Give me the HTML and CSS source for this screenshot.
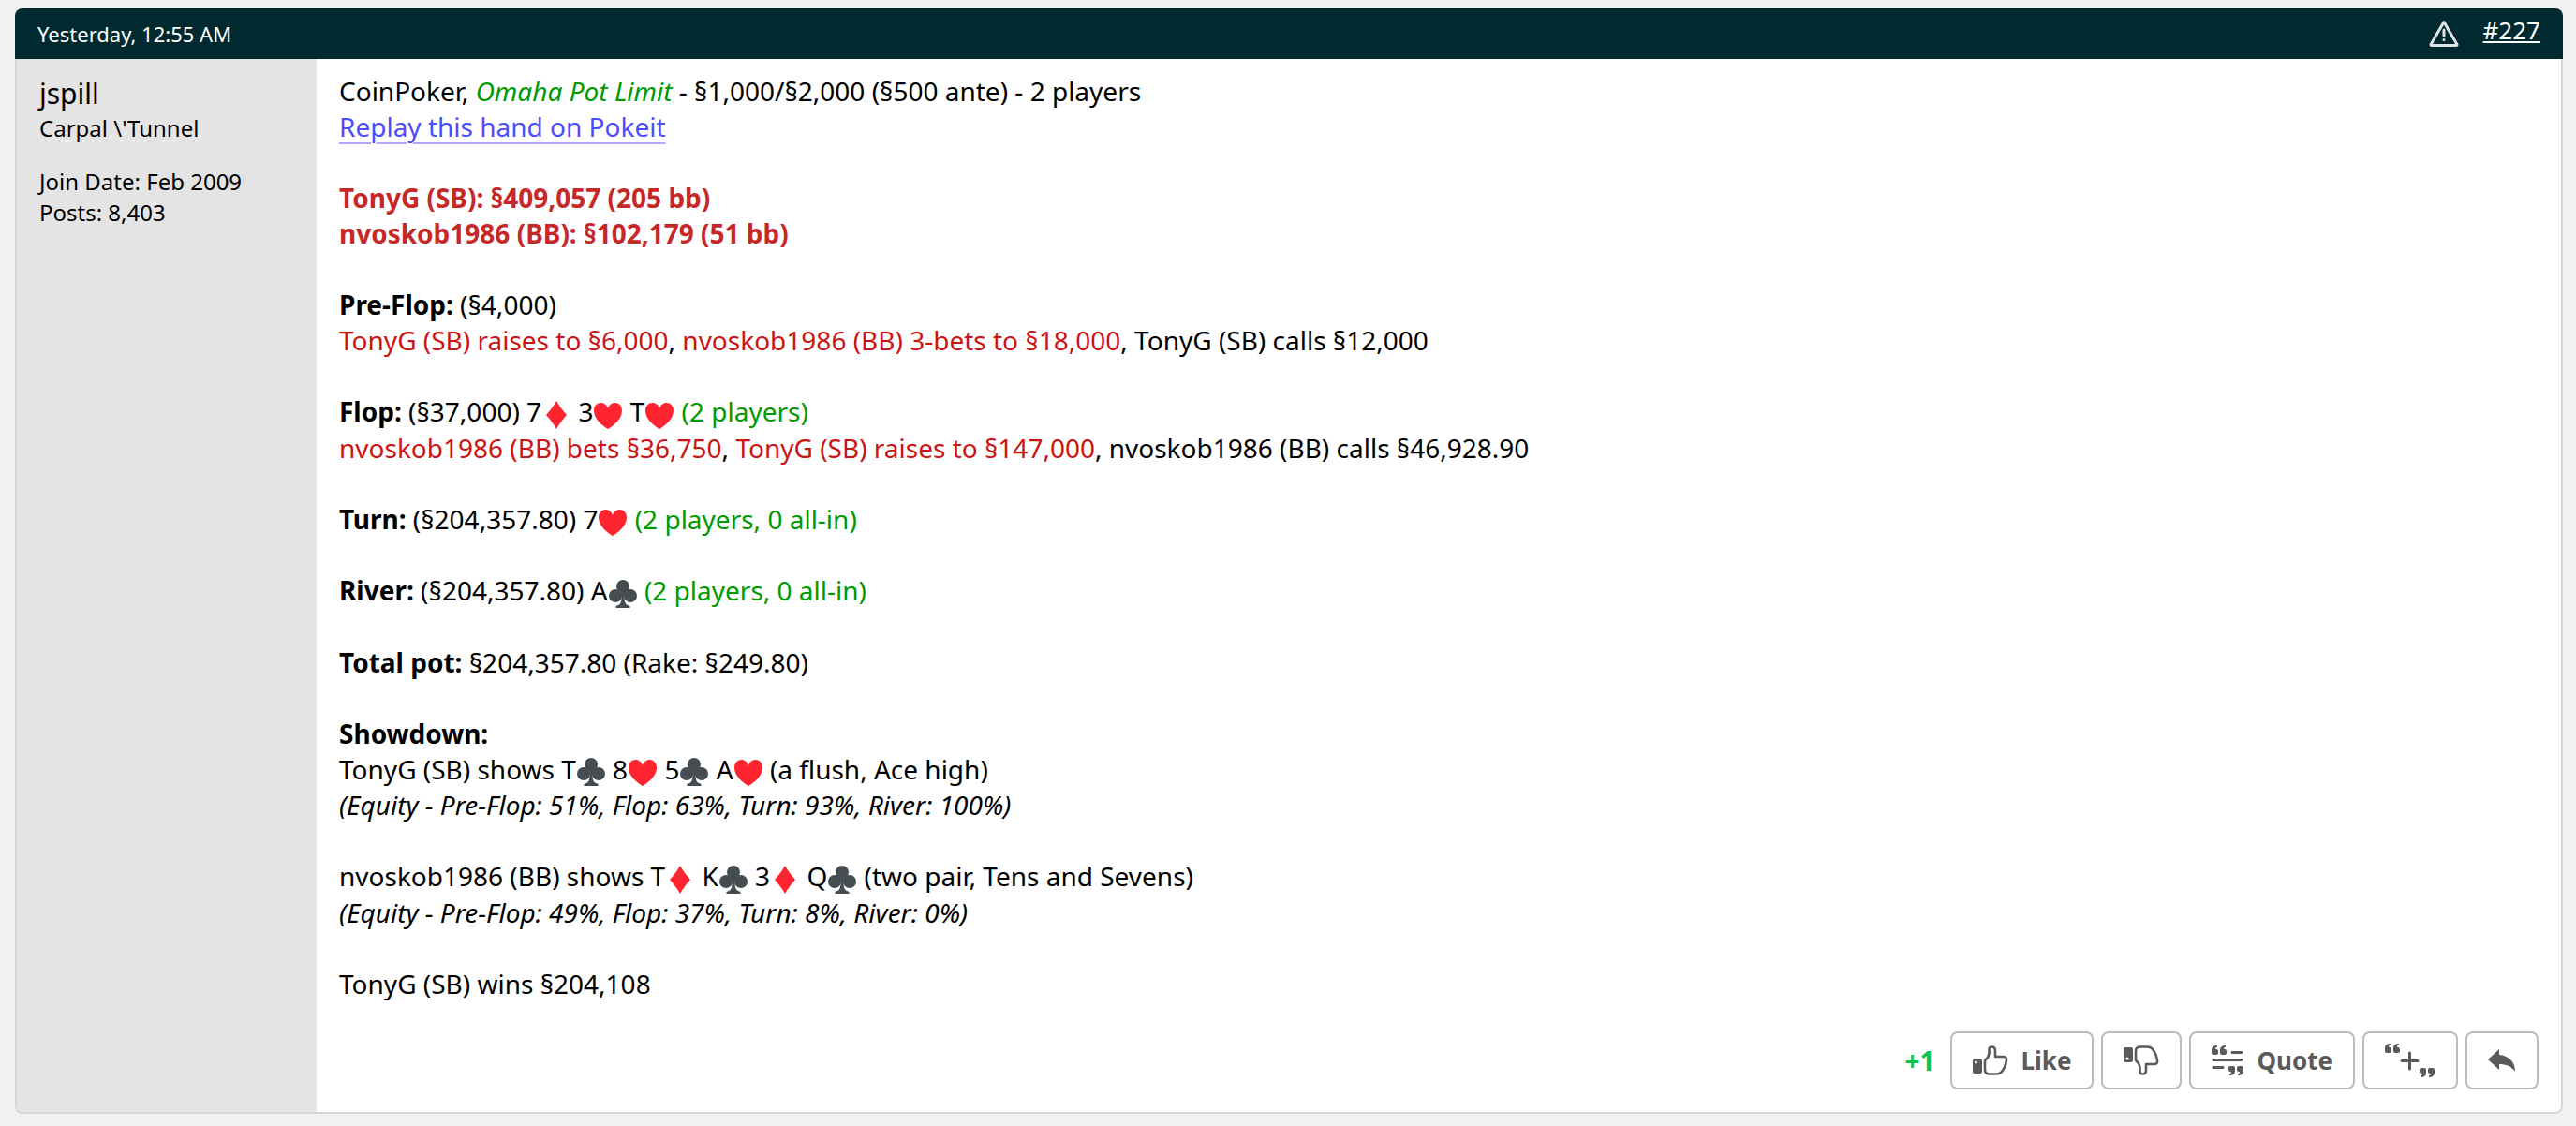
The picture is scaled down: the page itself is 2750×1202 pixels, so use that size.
FILE: index.html
```html
<!DOCTYPE html>
<html lang="en">

<head>
  <meta charset="UTF-8">
  <meta name="viewport" content="width=device-width, initial-scale=1.0">
  <title>Post #227</title>

  <link rel="stylesheet" href="styles.css">
</head>

<body>
  <!-- card suits and quote marks, reused below -->
  <svg class="sprite" width="0" height="0" aria-hidden="true">
    <symbol id="heart" viewBox="0 0 32 32">
      <path fill="#ff2530" d="M16 31C11 28 1 21 1 11.500C1 6 4.500 3 8.500 3C12 3 15 5.500 16 9C17 5.500 20 3 23.500 3C27.500 3 31 6 31 11.500C31 21 21 28 16 31Z" />
    </symbol>
    <symbol id="diamond" viewBox="0 0 32 32">
      <path fill="#ff2530" d="M16 1C19 6.500 23 11.500 27 16C23 20.500 19 25.500 16 31C13 25.500 9 20.500 5 16C9 11.500 13 6.500 16 1Z" />
    </symbol>
    <symbol id="club" viewBox="0 0 32 32">
      <g fill="#464d50">
        <circle cx="16" cy="8" r="7" />
        <circle cx="8" cy="18" r="7" />
        <circle cx="24" cy="18" r="7" />
        <path d="M13 12H19L17.500 18C17.500 23 18 26 20 27.500L23.500 29V31H8.500V29L12 27.500C14 26 14.500 23 14.500 18Z" />
      </g>
    </symbol>
    <symbol id="marks-open" viewBox="0 0 16 10">
      <path fill="currentColor" d="M6 0V1.500C4.500 2 4 2.800 4 4H5C6.200 4 7 4.800 7 6V8C7 9.200 6.200 10 5 10H2C.8 10 0 9.200 0 8V5C0 2 2 0 6 0ZM15 0V1.500C13.500 2 13 2.800 13 4H14C15.200 4 16 4.800 16 6V8C16 9.200 15.200 10 14 10H11C9.800 10 9 9.200 9 8V5C9 2 11 0 15 0Z" />
    </symbol>
  </svg>

  <article class="post">
    <header class="post-head">
      <time>Yesterday, 12:55 AM</time>
      <div class="head-links">
        <a href="#report" aria-label="Report post">
          <svg width="32" height="30" viewBox="0 0 32 30" fill="none" stroke="#dfe4e4" stroke-linejoin="round" stroke-linecap="round">
            <path stroke-width="3" d="M16 2.500L30 26.500Q30 27.500 29 27.500H3Q2 27.500 2 26.500Z" />
            <path stroke-width="3" d="M16 11V17M16 21.500V21.600" />
          </svg>
        </a>
        <a class="post-number" href="#227">#227</a>
      </div>
    </header>

    <div class="post-main">
      <aside class="user">
        <div class="user-name">jspill</div>
        <div>Carpal \'Tunnel</div>
        <div class="user-info">
          <div>Join Date: Feb 2009</div>
          <div>Posts: 8,403</div>
        </div>
      </aside>

      <div class="post-body">
        <div class="message">
          CoinPoker, <i class="green">Omaha Pot Limit</i> - §1,000/§2,000 (§500 ante) - 2 players<br>
          <a class="replay" href="#replay">Replay this hand on Pokeit</a><br>
          <br>
          <b class="stack">TonyG (SB): §409,057 (205 bb)</b><br>
          <b class="stack">nvoskob1986 (BB): §102,179 (51 bb)</b><br>
          <br>
          <b>Pre-Flop:</b> (§4,000)<br>
          <span class="red">TonyG (SB) raises to §6,000</span>, <span class="red">nvoskob1986 (BB) 3-bets to §18,000</span>, TonyG (SB) calls §12,000<br>
          <br>
          <b>Flop:</b> (§37,000) 7<svg class="suit"><use href="#diamond" /></svg> 3<svg class="suit"><use href="#heart" /></svg> T<svg class="suit"><use href="#heart" /></svg> <span class="green">(2 players)</span><br>
          <span class="red">nvoskob1986 (BB) bets §36,750</span>, <span class="red">TonyG (SB) raises to §147,000</span>, nvoskob1986 (BB) calls §46,928.90<br>
          <br>
          <b>Turn:</b> (§204,357.80) 7<svg class="suit"><use href="#heart" /></svg> <span class="green">(2 players, 0 all-in)</span><br>
          <br>
          <b>River:</b> (§204,357.80) A<svg class="suit"><use href="#club" /></svg> <span class="green">(2 players, 0 all-in)</span><br>
          <br>
          <b>Total pot:</b> §204,357.80 (Rake: §249.80)<br>
          <br>
          <b>Showdown:</b><br>
          TonyG (SB) shows T<svg class="suit"><use href="#club" /></svg> 8<svg class="suit"><use href="#heart" /></svg> 5<svg class="suit"><use href="#club" /></svg> A<svg class="suit"><use href="#heart" /></svg> (a flush, Ace high)<br>
          <i>(Equity - Pre-Flop: 51%, Flop: 63%, Turn: 93%, River: 100%)</i><br>
          <br>
          nvoskob1986 (BB) shows T<svg class="suit"><use href="#diamond" /></svg> K<svg class="suit"><use href="#club" /></svg> 3<svg class="suit"><use href="#diamond" /></svg> Q<svg class="suit"><use href="#club" /></svg> (two pair, Tens and Sevens)<br>
          <i>(Equity - Pre-Flop: 49%, Flop: 37%, Turn: 8%, River: 0%)</i><br>
          <br>
          TonyG (SB) wins §204,108
        </div>

        <div class="actions">
          <span class="score">+1</span>
          <button class="btn" type="button">
            <svg width="38" height="32" viewBox="0 0 38 32">
              <path fill="currentColor" fill-rule="evenodd" d="M2 14H8Q10 14 10 16V28Q10 30 8 30H2Q0 30 0 28V16Q0 14 2 14ZM3.500 16.500A1.500 1.500 0 1 0 3.500 19.500A1.500 1.500 0 1 0 3.500 16.500Z" />
              <path fill="none" stroke="currentColor" stroke-width="2.600" stroke-linejoin="round" d="M13 16Q17 13 17.500 8V4Q17.500 1.500 20.500 1.500Q24 1.500 24 6V12H33Q36.500 12 36 16Q35 23 31 28Q29 30.500 25 30.500H18Q13 30.500 13 26Z" />
            </svg>
            Like
          </button>
          <button class="btn" type="button" aria-label="Dislike">
            <svg width="38" height="32" viewBox="0 0 38 32">
              <path fill="currentColor" fill-rule="evenodd" d="M2 2H8Q10 2 10 4V16Q10 18 8 18H2Q0 18 0 16V4Q0 2 2 2ZM4 12.500A1.500 1.500 0 1 0 4 15.500A1.500 1.500 0 1 0 4 12.500Z" />
              <path fill="none" stroke="currentColor" stroke-width="2.600" stroke-linejoin="round" d="M13 16Q17 19 17.500 24V28Q17.500 30.500 20.500 30.500Q24 30.500 24 26V20H33Q36.500 20 36 16Q35 9 31 4Q29 1.500 25 1.500H18Q13 1.500 13 6Z" />
            </svg>
          </button>
          <button class="btn" type="button">
            <svg width="34" height="32" viewBox="0 0 34 32">
              <use href="#marks-open" x="0" y="0" width="16" height="10" />
              <path fill="none" stroke="currentColor" stroke-width="3" stroke-linecap="round" d="M22 7.500H32M2 15.500H32M2 23.500H12" />
              <use href="#marks-open" width="16" height="10" transform="translate(34 32) rotate(180)" />
            </svg>
            Quote
          </button>
          <button class="btn" type="button" aria-label="Multi-quote">
            <svg width="54" height="36" viewBox="0 0 54 36">
              <use href="#marks-open" x="0" y="0" width="16" height="10" />
              <path fill="none" stroke="currentColor" stroke-width="3" stroke-linecap="round" d="M18 18.500H35M26.500 10V27" />
              <use href="#marks-open" width="16" height="10" transform="translate(53 36) rotate(180)" />
            </svg>
          </button>
          <button class="btn" type="button" aria-label="Quick reply">
            <svg width="30" height="24" viewBox="0 0 30 24">
              <path fill="currentColor" d="M0 11L12 0V6C22 7 29 13 29 24C25 18 19 16 12 16V22Z" />
            </svg>
          </button>
        </div>
      </div>
    </div>
  </article>
</body>

</html>
```
FILE: styles.css
```css
* {
  margin: 0;
  padding: 0;
  box-sizing: border-box;
}

body {
  padding: 9px 14px 13px 16px;
  font-family: "Noto Sans", sans-serif;
  font-size: 28px;
  line-height: 38px;
  color: #000;
  background: #f1f1f1;
}

.sprite {
  position: absolute;
}

.post {
  border-radius: 8px;
  overflow: hidden;
}

.post-head {
  display: flex;
  justify-content: space-between;
  height: 54px;
  padding: 0 24px;
  color: #fff;
  font-size: 22px;
  line-height: 54px;
  background: #002a30;
}

.head-links {
  display: flex;
  gap: 26px;
}

.head-links svg {
  display: block;
  margin-top: 12px;
}

.post-number {
  color: #fff;
  font-size: 26px;
  line-height: 46px;
  text-decoration-thickness: 2px;
  text-underline-offset: 2px;
}

.post-main {
  display: flex;
  border: 2px solid #d6d6d6;
  border-top: 0;
  border-radius: 0 0 8px 8px;
  overflow: hidden;
  background: #fff;
}

.user {
  flex: none;
  width: 320px;
  padding: 16px 24px;
  font-size: 24px;
  line-height: 33px;
  background: #e4e4e4;
}

.user-name {
  font-size: 30px;
  line-height: 41px;
}

.user-info {
  margin-top: 24px;
}

.post-body {
  flex: 1;
  padding: 15px 24px 24px;
}

.green {
  color: #090;
}

.red {
  color: #cb1414;
}

.stack {
  color: #c62828;
}

.replay {
  color: #4c4cff;
  text-decoration-color: #b3a6ff;
  text-decoration-thickness: 2px;
  text-underline-offset: 6px;
}

.suit {
  width: 32px;
  height: 32px;
  vertical-align: middle;
}

.actions {
  display: flex;
  align-items: center;
  justify-content: flex-end;
  gap: 8px;
  margin-top: 32px;
}

.score {
  margin-right: 8px;
  font-weight: 700;
  color: #0ac452;
}

.btn {
  display: flex;
  align-items: center;
  gap: 14px;
  height: 62px;
  padding: 0 22px;
  border: 2px solid #bbb;
  border-radius: 8px;
  font-family: inherit;
  font-size: 26px;
  font-weight: 700;
  color: #5a5a5a;
  background: #fff;
  cursor: pointer;
}
```
